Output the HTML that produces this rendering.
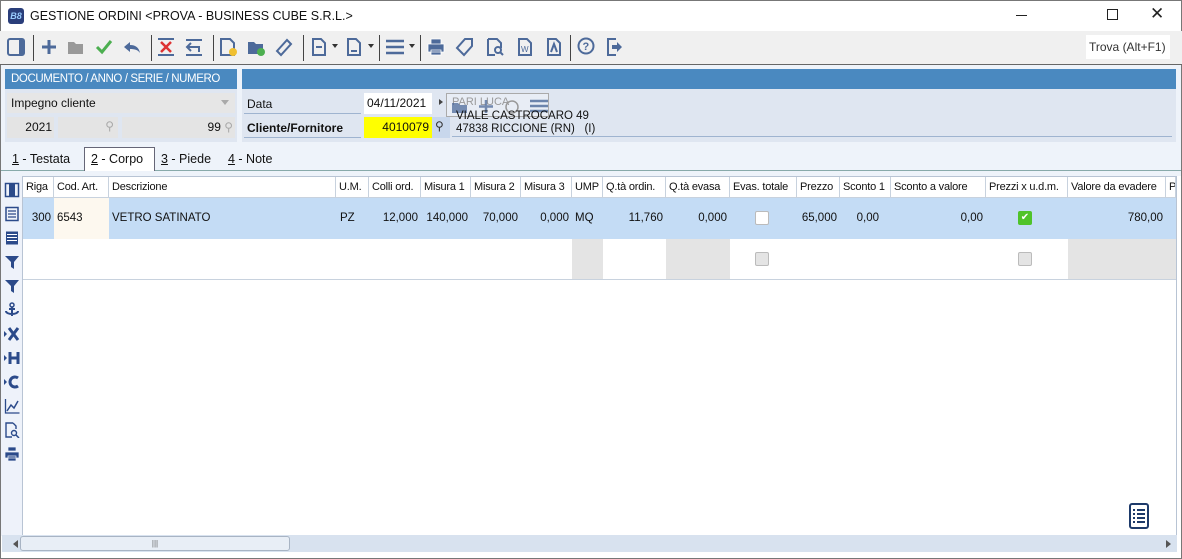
<!DOCTYPE html>
<html><head><meta charset="utf-8"><style>
*{box-sizing:border-box;margin:0;padding:0}
body{width:1182px;height:559px;overflow:hidden;background:#fff;font-family:"Liberation Sans",sans-serif;font-size:12px;color:#111;position:relative}
.a{position:absolute}
.tb{left:0;top:31px;width:1182px;height:34px;background:#f0f0f0;border-bottom:1px solid #666}
.ic{position:absolute;top:6px;width:20px;height:20px}
.sep{position:absolute;top:4px;width:1px;height:26px;background:#444}
.hdr{background:#4a89c0;color:#fff;font-size:11.5px;letter-spacing:-0.4px;padding:4px 6px;height:20px;white-space:nowrap}
.grid div{position:absolute}
.th{top:177px;height:21px;border-right:1px solid #c8d2de;border-bottom:1px solid #c8d2de;padding:4px 3px;font-size:11px;letter-spacing:-0.2px;white-space:nowrap;overflow:hidden;background:#fff}
.td{top:198px;height:41px;padding-top:14px;font-size:11.5px;white-space:nowrap}
.r{text-align:right;padding-right:3px}
.sb{position:absolute;left:4px;width:16px;height:16px}
</style></head><body>
<div class="a" style="left:0;top:0;width:1182px;height:559px;border:1px solid #777"></div>
<div class="a" style="left:8px;top:8px;width:16px;height:16px;background:#2a3e7a;border-radius:3px;color:#9cf;font-size:9px;font-style:italic;text-align:center;line-height:16px;font-weight:bold">B8</div>
<div class="a" style="left:30px;top:9px;font-size:12.5px">GESTIONE ORDINI &lt;PROVA - BUSINESS CUBE S.R.L.&gt;</div>
<div class="a" style="left:1016px;top:15px;width:11px;height:1px;background:#222"></div>
<div class="a" style="left:1107px;top:9px;width:11px;height:11px;border:1px solid #222"></div>
<div class="a" style="left:1150px;top:4px;font-size:17px;color:#222">✕</div>
<div class="a tb">
<svg class="ic" style="left:6px" viewBox="0 0 20 20"><rect x="2" y="2" width="16" height="16" rx="2" fill="none" stroke="#4d6a9a" stroke-width="2"/><rect x="13" y="3" width="4" height="14" fill="#4d6a9a"/></svg>
<div class="sep" style="left:33px"></div>
<svg class="ic" style="left:39px" viewBox="0 0 20 20"><path d="M10 3v14M3 10h14" stroke="#4d6a9a" stroke-width="3"/></svg>
<svg class="ic" style="left:66px" viewBox="0 0 20 20"><path d="M2 5h6l2 2h7v10H2z" fill="#999"/></svg>
<svg class="ic" style="left:94px" viewBox="0 0 20 20"><path d="M3 10l5 5L17 4" fill="none" stroke="#4caf50" stroke-width="3"/></svg>
<svg class="ic" style="left:122px" viewBox="0 0 20 20"><path d="M8 5L2 10l6 5v-3c5 0 8 1 10 4-1-5-4-8-10-8z" fill="#4d6a9a"/></svg>
<div class="sep" style="left:151px"></div>
<svg class="ic" style="left:156px" viewBox="0 0 20 20"><path d="M2 2h16M2 18h16" stroke="#4d6a9a" stroke-width="2"/><path d="M5 5l10 10M15 5L5 15" stroke="#d33" stroke-width="2.5"/></svg>
<svg class="ic" style="left:184px" viewBox="0 0 20 20"><path d="M2 3h16M2 18h16" stroke="#4d6a9a" stroke-width="2"/><path d="M7 6L3 10l4 4M3 10h12v5" fill="none" stroke="#4d6a9a" stroke-width="2"/></svg>
<div class="sep" style="left:213px"></div>
<svg class="ic" style="left:218px" viewBox="0 0 20 20"><path d="M3 2h9l4 4v12H3z" fill="none" stroke="#4d6a9a" stroke-width="2"/><circle cx="15" cy="15" r="4" fill="#f0c030"/></svg>
<svg class="ic" style="left:246px" viewBox="0 0 20 20"><path d="M2 5h6l2 2h7v10H2z" fill="#4d6a9a"/><circle cx="15" cy="15" r="4" fill="#4caf50"/></svg>
<svg class="ic" style="left:274px" viewBox="0 0 20 20"><path d="M3 14L13 3l4 4L7 18z" fill="none" stroke="#4d6a9a" stroke-width="2"/></svg>
<div class="sep" style="left:303px"></div>
<svg class="ic" style="left:309px" viewBox="0 0 20 20"><path d="M4 2h8l4 4v12H4z M7 10h6" fill="none" stroke="#4d6a9a" stroke-width="2"/></svg>
<div class="a" style="left:332px;top:13px;border:3px solid transparent;border-top:4px solid #333"></div>
<svg class="ic" style="left:344px" viewBox="0 0 20 20"><path d="M4 2h8l4 4v12H4z M7 14h6" fill="none" stroke="#4d6a9a" stroke-width="2"/></svg>
<div class="a" style="left:368px;top:13px;border:3px solid transparent;border-top:4px solid #333"></div>
<div class="sep" style="left:379px"></div>
<svg class="ic" style="left:385px" viewBox="0 0 20 20"><path d="M1 4h18M1 10h18M1 16h18" stroke="#4d6a9a" stroke-width="2.5"/></svg>
<div class="a" style="left:409px;top:13px;border:3px solid transparent;border-top:4px solid #333"></div>
<div class="sep" style="left:420px"></div>
<svg class="ic" style="left:426px" viewBox="0 0 20 20"><path d="M5 2h10v5H5z M2 7h16v8H2z M5 13h10v5H5z" fill="#4d6a9a" stroke="#fff" stroke-width=".8"/></svg>
<svg class="ic" style="left:455px" viewBox="0 0 20 20"><path d="M10 2h7v7l-8 9-7-7z" fill="none" stroke="#4d6a9a" stroke-width="2"/></svg>
<svg class="ic" style="left:485px" viewBox="0 0 20 20"><path d="M3 2h9l4 4v5M3 2v16h7" fill="none" stroke="#4d6a9a" stroke-width="2"/><circle cx="13" cy="13" r="3" fill="none" stroke="#4d6a9a" stroke-width="2"/><path d="M15 15l3 3" stroke="#4d6a9a" stroke-width="2"/></svg>
<svg class="ic" style="left:515px" viewBox="0 0 20 20"><path d="M4 2h8l4 4v12H4z" fill="none" stroke="#4d6a9a" stroke-width="2"/><text x="6" y="15" font-size="8" fill="#4d6a9a" font-family="Liberation Sans">W</text></svg>
<svg class="ic" style="left:544px" viewBox="0 0 20 20"><path d="M4 2h8l4 4v12H4z M7 15l3-8 3 8" fill="none" stroke="#4d6a9a" stroke-width="2"/></svg>
<div class="sep" style="left:570px"></div>
<svg class="ic" style="left:576px" viewBox="0 0 20 20"><circle cx="10" cy="9" r="7.5" fill="none" stroke="#4d6a9a" stroke-width="2"/><text x="6.5" y="13" font-size="11" fill="#4d6a9a" font-family="Liberation Sans" font-weight="bold">?</text></svg>
<svg class="ic" style="left:604px" viewBox="0 0 20 20"><path d="M12 2H4v16h8" fill="none" stroke="#4d6a9a" stroke-width="2"/><path d="M8 8h5V5l5 5-5 5v-3H8z" fill="#4d6a9a"/></svg>
<div class="a" style="left:1086px;top:4px;width:84px;height:24px;background:#fff;color:#333;padding:5px 3px;font-size:12px">Trova (Alt+F1)</div>
</div>
<div class="a" style="left:1px;top:65px;width:1180px;height:82px;background:#eef3fa"></div>
<div class="a hdr" style="left:5px;top:69px;width:232px">DOCUMENTO / ANNO / SERIE / NUMERO</div>
<div class="a" style="left:5px;top:89px;width:232px;height:53px;background:#dfe6f1"></div>
<div class="a" style="left:7px;top:93px;width:228px;height:20px;background:#e6e6e6;padding:3px 4px">Impegno cliente<span style="position:absolute;right:6px;top:7px;border:4px solid transparent;border-top:5px solid #aaa"></span></div>
<div class="a" style="left:7px;top:117px;width:47px;height:21px;background:#e4e4e4;text-align:right;padding:3px 2px">2021</div>
<div class="a" style="left:58px;top:117px;width:60px;height:21px;background:#e4e4e4;color:#aaa;text-align:right;padding:2px 4px">⚲</div>
<div class="a" style="left:122px;top:117px;width:113px;height:21px;background:#e4e4e4;text-align:right;padding:3px 2px">99 <span style="color:#aaa">⚲</span></div>
<div class="a hdr" style="left:242px;top:69px;width:934px"></div>
<div class="a" style="left:242px;top:89px;width:934px;height:53px;background:#dfe6f1"></div>
<div class="a" style="left:247px;top:97px">Data</div>
<div class="a" style="left:244px;top:113px;width:117px;height:1px;background:#9fb4d0"></div>
<div class="a" style="left:247px;top:121px;font-weight:bold">Cliente/Fornitore</div>
<div class="a" style="left:244px;top:137px;width:117px;height:1px;background:#9fb4d0"></div>
<div class="a" style="left:364px;top:93px;width:68px;height:21px;background:#fff;padding:3px 3px">04/11/2021</div>
<div class="a" style="left:439px;top:99px;border:3px solid transparent;border-left:4px solid #444"></div>
<div class="a" style="left:446px;top:93px;width:103px;height:24px;border:1px solid #aaa;background:#e8edf5"></div>
<div class="a" style="left:452px;top:96px;color:#999;font-size:11px">PARI LUCA</div>
<svg class="a" style="left:450px;top:97px" width="100" height="18" viewBox="0 0 100 18"><path d="M2 6h6l2 2h7v8H2z" fill="#4d6a9a" opacity=".75"/><path d="M36 3v13M29 9.5h14" stroke="#4d6a9a" stroke-width="2.5" opacity=".75"/><circle cx="62" cy="10" r="6" fill="none" stroke="#999" stroke-width="1.5"/><path d="M80 4h18M80 9h18M80 14h18" stroke="#4d6a9a" stroke-width="2.5" opacity=".8"/></svg>
<div class="a" style="left:456px;top:110px;font-size:11.5px">VIALE CASTROCARO 49</div>
<div class="a" style="left:364px;top:117px;width:68px;height:21px;background:#ffff00;text-align:right;padding:3px 3px">4010079</div>
<div class="a" style="left:432px;top:117px;width:18px;height:21px;background:#c8d7ec;color:#333;padding:2px 3px">⚲</div>
<div class="a" style="left:456px;top:123px;font-size:11.5px">47838 RICCIONE (RN) &nbsp; (I)</div>
<div class="a" style="left:452px;top:136px;width:720px;height:1px;background:#9fb4d0"></div>
<div class="a" style="left:1px;top:145px;width:1180px;height:31px;background:#eef3fa"></div>
<div class="a" style="left:1px;top:170px;width:1180px;height:1px;background:#8aa"></div>
<div class="a" style="left:12px;top:152px;font-size:12.5px"><u>1</u> - Testata</div>
<div class="a" style="left:84px;top:147px;width:71px;height:24px;background:#fff;border:1px solid #667;border-bottom:none;padding:4px 6px;font-size:12.5px"><u>2</u> - Corpo</div>
<div class="a" style="left:161px;top:152px;font-size:12.5px"><u>3</u> - Piede</div>
<div class="a" style="left:228px;top:152px;font-size:12.5px"><u>4</u> - Note</div>
<div class="a" style="left:1px;top:176px;width:21px;height:360px;background:#eef2fa"></div>
<svg class="sb" style="top:182px" viewBox="0 0 16 16"><rect x="1.5" y="1.5" width="13" height="13" fill="none" stroke="#2b4a8a" stroke-width="1.5"/><rect x="5" y="2" width="6" height="12" fill="#2b4a8a"/></svg>
<svg class="sb" style="top:206px" viewBox="0 0 16 16"><rect x="2" y="1.5" width="12" height="13" fill="none" stroke="#2b4a8a" stroke-width="1.5"/><path d="M4 5h8M4 8h8M4 11h8" stroke="#2b4a8a" stroke-width="1.3"/></svg>
<svg class="sb" style="top:230px" viewBox="0 0 16 16"><rect x="2" y="1.5" width="12" height="13" fill="#2b4a8a"/><path d="M3 4.5h10M3 7.5h10M3 10.5h10" stroke="#fff" stroke-width="1"/></svg>
<svg class="sb" style="top:254px" viewBox="0 0 16 16"><path d="M1 2h14l-5 6v7l-3-2V8z" fill="#2b4a8a"/></svg>
<svg class="sb" style="top:278px" viewBox="0 0 16 16"><path d="M1 2h14l-5 6v7l-3-2V8z" fill="#2b4a8a"/></svg>
<svg class="sb" style="top:302px" viewBox="0 0 16 16"><circle cx="8" cy="3" r="2" fill="none" stroke="#2b4a8a" stroke-width="1.5"/><path d="M8 5v9M2 9c0 4 12 4 12 0M5 7h6" fill="none" stroke="#2b4a8a" stroke-width="2"/></svg>
<svg class="sb" style="top:326px" viewBox="0 0 16 16"><path d="M0 5l3 3-3 3z" fill="#2b4a8a"/><path d="M5 2l9 12M14 2L5 14" stroke="#2b4a8a" stroke-width="3"/></svg>
<svg class="sb" style="top:350px" viewBox="0 0 16 16"><path d="M0 5l3 3-3 3z" fill="#2b4a8a"/><path d="M6 2v12M14 2v12M6 8h8" stroke="#2b4a8a" stroke-width="3"/></svg>
<svg class="sb" style="top:374px" viewBox="0 0 16 16"><path d="M0 5l3 3-3 3z" fill="#2b4a8a"/><path d="M14 4a5 5 0 1 0 0 8" fill="none" stroke="#2b4a8a" stroke-width="3"/></svg>
<svg class="sb" style="top:398px" viewBox="0 0 16 16"><path d="M1.5 1v14h14" fill="none" stroke="#2b4a8a" stroke-width="1.3"/><path d="M3 13l4-6 3 3 4-7" fill="none" stroke="#2b4a8a" stroke-width="1.5"/></svg>
<svg class="sb" style="top:422px" viewBox="0 0 16 16"><path d="M9 1H2v14h6M9 1l3 3v3" fill="none" stroke="#2b4a8a" stroke-width="1.4"/><circle cx="10" cy="11" r="2.5" fill="none" stroke="#2b4a8a" stroke-width="1.4"/><path d="M12 13l3 3" stroke="#2b4a8a" stroke-width="1.5"/></svg>
<svg class="sb" style="top:446px" viewBox="0 0 16 16"><path d="M4 1h8v4H4zM1 6h14v6H1zM4 10h8v5H4z" fill="#2b4a8a" stroke="#eef2fa" stroke-width=".7"/></svg>
<div class="a" style="left:22px;top:176px;width:1155px;height:360px;background:#fff;border:1px solid #b8c4d4"></div>
<div class="grid">
<div class="th" style="left:23px;width:31px">Riga</div>
<div class="th" style="left:54px;width:55px">Cod. Art.</div>
<div class="th" style="left:109px;width:227px">Descrizione</div>
<div class="th" style="left:336px;width:33px">U.M.</div>
<div class="th" style="left:369px;width:52px">Colli ord.</div>
<div class="th" style="left:421px;width:50px">Misura 1</div>
<div class="th" style="left:471px;width:50px">Misura 2</div>
<div class="th" style="left:521px;width:51px">Misura 3</div>
<div class="th" style="left:572px;width:31px">UMP</div>
<div class="th" style="left:603px;width:63px">Q.tà ordin.</div>
<div class="th" style="left:666px;width:64px">Q.tà evasa</div>
<div class="th" style="left:730px;width:67px">Evas. totale</div>
<div class="th" style="left:797px;width:43px">Prezzo</div>
<div class="th" style="left:840px;width:51px">Sconto 1</div>
<div class="th" style="left:891px;width:95px">Sconto a valore</div>
<div class="th" style="left:986px;width:82px">Prezzi x u.d.m.</div>
<div class="th" style="left:1068px;width:98px">Valore da evadere</div>
<div class="th" style="left:1166px;width:10px">P</div>
<div style="left:23px;top:198px;width:1153px;height:41px;background:#c4dcf5"></div>
<div style="left:54px;top:198px;width:55px;height:41px;background:#fdf8ef"></div>
<div style="left:23px;top:239px;width:1153px;height:41px;border-bottom:1px solid #c8d2de"></div>
<div style="left:572px;top:239px;width:31px;height:40px;background:#e4e4e4"></div>
<div style="left:666px;top:239px;width:64px;height:40px;background:#e4e4e4"></div>
<div style="left:1068px;top:239px;width:108px;height:40px;background:#e4e4e4"></div>
<div class="td r" style="left:23px;width:31px">300</div>
<div class="td" style="left:57px">6543</div>
<div class="td" style="left:112px">VETRO SATINATO</div>
<div class="td" style="left:340px">PZ</div>
<div class="td r" style="left:369px;width:52px">12,000</div>
<div class="td r" style="left:421px;width:50px">140,000</div>
<div class="td r" style="left:471px;width:50px">70,000</div>
<div class="td r" style="left:521px;width:51px">0,000</div>
<div class="td" style="left:575px">MQ</div>
<div class="td r" style="left:603px;width:63px">11,760</div>
<div class="td r" style="left:666px;width:64px">0,000</div>
<div class="td r" style="left:797px;width:43px">65,000</div>
<div class="td r" style="left:840px;width:51px;padding-right:12px">0,00</div>
<div class="td r" style="left:891px;width:95px">0,00</div>
<div class="td r" style="left:1068px;width:98px">780,00</div>
<div style="left:755px;top:211px;width:14px;height:14px;background:#fff;border:1px solid #bbb;border-radius:2px"></div>
<div style="left:1018px;top:211px;width:14px;height:14px;background:#4fc32a;border-radius:2px;color:#fff;font-size:10px;text-align:center;line-height:14px">✔</div>
<div style="left:755px;top:252px;width:14px;height:14px;background:#e4e4e4;border:1px solid #bbb;border-radius:2px"></div>
<div style="left:1018px;top:252px;width:14px;height:14px;background:#e4e4e4;border:1px solid #bbb;border-radius:2px"></div>
</div>
<svg class="a" style="left:1129px;top:503px" width="20" height="26" viewBox="0 0 20 26"><rect x="1" y="1" width="18" height="24" rx="2" fill="none" stroke="#1d3a6a" stroke-width="2"/><path d="M4 7h2M8 7h8M4 11h2M8 11h8M4 15h2M8 15h8M4 19h2M8 19h8" stroke="#1d3a6a" stroke-width="2"/></svg>
<div class="a" style="left:2px;top:535px;width:1175px;height:17px;background:#d8e2ef"></div>
<div class="a" style="left:9px;top:540px;border:4px solid transparent;border-right:5px solid #555"></div>
<div class="a" style="left:20px;top:536px;width:270px;height:15px;background:#e8eef6;border:1px solid #a8b4c4;border-radius:3px;text-align:center;font-size:8px;color:#666;line-height:13px">|||</div>
<div class="a" style="left:1166px;top:540px;border:4px solid transparent;border-left:5px solid #555"></div>
</body></html>
